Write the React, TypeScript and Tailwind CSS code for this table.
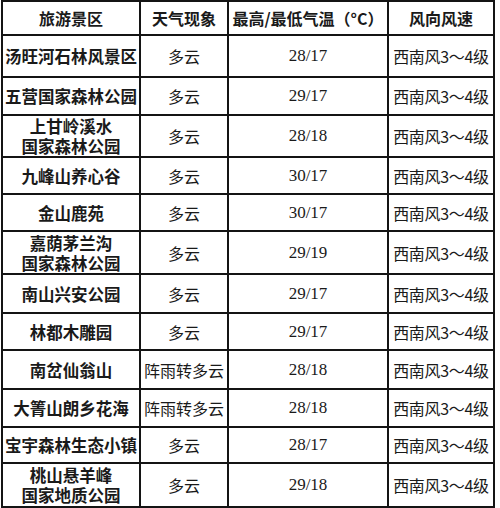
import React from 'react';

const rows = [
  { name: ['汤旺河石林风景区'], weather: '多云', temp: '28/17', h: 'h-[40px]' },
  { name: ['五营国家森林公园'], weather: '多云', temp: '29/17', h: 'h-[36px]' },
  { name: ['上甘岭溪水', '国家森林公园'], weather: '多云', temp: '28/18', h: 'h-[40px]' },
  { name: ['九峰山养心谷'], weather: '多云', temp: '30/17', h: 'h-[35px]' },
  { name: ['金山鹿苑'], weather: '多云', temp: '30/17', h: 'h-[35px]' },
  { name: ['嘉荫茅兰沟', '国家森林公园'], weather: '多云', temp: '29/19', h: 'h-[41px]' },
  { name: ['南山兴安公园'], weather: '多云', temp: '29/17', h: 'h-[37px]' },
  { name: ['林都木雕园'], weather: '多云', temp: '29/17', h: 'h-[35px]' },
  { name: ['南岔仙翁山'], weather: '阵雨转多云', temp: '28/18', h: 'h-[37px]' },
  { name: ['大箐山朗乡花海'], weather: '阵雨转多云', temp: '28/18', h: 'h-[36px]' },
  { name: ['宝宇森林生态小镇'], weather: '多云', temp: '28/17', h: 'h-[34px]' },
  { name: ['桃山悬羊峰', '国家地质公园'], weather: '多云', temp: '29/18', h: 'h-[42px]' },
];

const sans = "font-['Noto_Sans_CJK_SC',sans-serif]";
const cell = 'bg-white flex flex-col items-center justify-center text-center text-[#1a1a1a]';

export default function App() {
  return (
    <div className="w-[500px] h-[508px] bg-white pl-[1px]">
      <div className="w-[494px] bg-[#141414] p-[2px] grid grid-cols-[136px_86px_158px_104px] gap-[2px]">
        {/* Header */}
        <div className={`${cell} h-[32px] ${sans} font-bold text-[16px]`}>旅游景区</div>
        <div className={`${cell} h-[32px] ${sans} font-bold text-[16px]`}>天气现象</div>
        <div className={`${cell} h-[32px] ${sans} font-bold text-[16px] whitespace-nowrap`}>最高/最低气温（°C）</div>
        <div className={`${cell} h-[32px] ${sans} font-bold text-[16px]`}>风向风速</div>

        {rows.map((r, i) => (
          <React.Fragment key={i}>
            <div className={`${cell} ${r.h} ${sans} font-semibold text-[16.5px] whitespace-nowrap`}>
              <p className="leading-[20px]">
                {r.name[0]}
                {r.name[1] && (
                  <>
                    <br />
                    {r.name[1]}
                  </>
                )}
              </p>
            </div>
            <div className={`${cell} ${r.h} ${sans} text-[16px] whitespace-nowrap`}>{r.weather}</div>
            <div className={`${cell} ${r.h} font-['Liberation_Serif',serif] text-[17px]`}>{r.temp}</div>
            <div className={`${cell} ${r.h} ${sans} text-[16px] whitespace-nowrap tracking-[-0.3px]`}>西南风3～4级</div>
          </React.Fragment>
        ))}
      </div>
    </div>
  );
}
